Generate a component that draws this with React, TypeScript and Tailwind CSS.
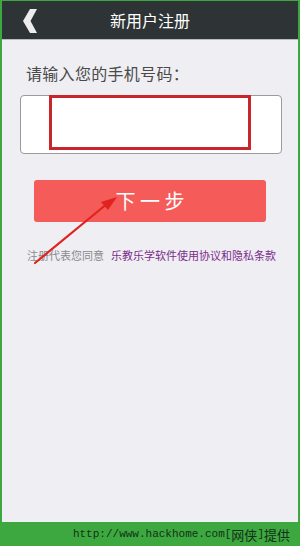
import React from 'react';

const cjk = { fontFamily: '"Noto Sans CJK SC", "Noto Sans", sans-serif' };

const App: React.FC = () => {
  return (
    <div className="w-[300px] h-[546px] bg-[#3ca83f] pt-[1px] flex flex-col overflow-hidden" style={cjk}>
      <div className="mx-[2px] flex-1 flex flex-col bg-[#efeef3] relative">
        {/* header */}
        <div className="h-[38px] bg-[#2e3435] flex items-center relative">
          <svg className="absolute left-[19px] top-[7px]" width="17" height="26" viewBox="0 0 17 26">
            <polygon points="9,1 16,1 9.5,13 16,25 9,25 2,13" fill="#ececec" />
          </svg>
          <div className="flex-1 text-center text-white text-[16px] leading-none">新用户注册</div>
        </div>
        <div className="h-[1px] bg-[#b9bcbe]" />

        {/* body */}
        <div className="pt-[25px] pl-[24px] text-[16px] leading-none text-[#4a4a4a] tracking-[0.3px]">请输入您的手机号码：</div>

        <div className="mt-[14px] ml-[18px] mr-[16px] h-[59px] bg-white border border-[#9a9a9a] rounded-[4px] relative">
          <div className="absolute left-[28px] top-[-1px] w-[202px] h-[55px] border-[3px] border-[#c8262b]" />
        </div>

        <div className="mt-[26px] mx-[32px] h-[42px] bg-[#f45b59] rounded-[3px] flex items-center justify-center">
          <span className="text-white text-[20px] leading-none">下 一 步</span>
        </div>

        <div className="mt-[28px] pl-[25px] text-[11px] leading-none whitespace-nowrap">
          <span className="text-[#8a8a8e]">注册代表您同意</span>
          <span className="text-[#7a2d8c] ml-[7px]">乐教乐学软件使用协议和隐私条款</span>
        </div>

        {/* annotation arrow */}
        <svg className="absolute left-0 top-0 pointer-events-none" width="296" height="300">
          <line x1="33" y1="262" x2="106" y2="202" stroke="#e0231f" strokeWidth="2.2" strokeLinecap="round" />
          <polygon points="115,196 99,201 106,209" fill="#e0231f" />
        </svg>
      </div>

      <div className="h-[24px] flex items-center justify-end pr-[10px] text-[#14301a] leading-none whitespace-nowrap">
        <span className="text-[11px]" style={{ fontFamily: '"Liberation Mono", monospace' }}>http://www.hackhome.com[</span>
        <span className="text-[13px]">网侠</span>
        <span className="text-[11px]" style={{ fontFamily: '"Liberation Mono", monospace' }}>]</span>
        <span className="text-[13px]">提供</span>
      </div>
    </div>
  );
};

export default App;
